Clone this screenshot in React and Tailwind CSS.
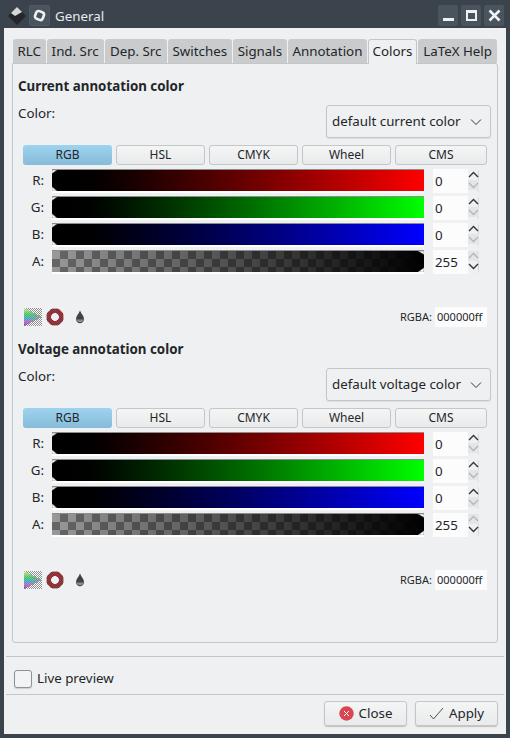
import React from "react";

const tabs = [
  ["RLC", "w-[33px]"],
  ["Ind. Src", "w-[58px]"],
  ["Dep. Src", "w-[63px]"],
  ["Switches", "w-[65px]"],
  ["Signals", "w-[55px]"],
  ["Annotation", "w-[80px]"],
  ["Colors", "w-[50px]"],
  ["LaTeX Help", "w-[80px]"],
];

const modes = [
  ["RGB", "w-[89px]"],
  ["HSL", "w-[89px]"],
  ["CMYK", "w-[89px]"],
  ["Wheel", "w-[89px]"],
  ["CMS", "w-[92px]"],
];

const Handles = ({ right }) => (
  <svg className={`absolute top-0 ${right ? "right-0" : "left-0"} h-full w-[6px]`} viewBox="0 0 6 24" preserveAspectRatio="none">
    {right ? (
      <>
        <polygon points="6,0 0,0 6,4" fill="#fff" stroke="#555" strokeWidth="0.5" />
        <polygon points="6,24 0,24 6,19" fill="#fff" stroke="#555" strokeWidth="0.5" />
      </>
    ) : (
      <>
        <polygon points="0,0 5,0 0,4" fill="#fff" stroke="#555" strokeWidth="0.5" />
        <polygon points="0,24 5,24 0,19" fill="#fff" stroke="#555" strokeWidth="0.5" />
      </>
    )}
  </svg>
);

const Arrow = ({ up, dim }) => (
  <svg width="11" height="10" viewBox="0 0 11 10" className={dim ? "bg-[#e3e5e7]" : ""}>
    <path d={up ? "M1 7 L5.5 2.5 L10 7" : "M1 3 L5.5 7.5 L10 3"} fill="none" stroke={dim ? "#b4b6b8" : "#31363b"} strokeWidth="1.4" />
  </svg>
);

const SliderRow = ({ label, bar, value, handle }) => (
  <div className="flex items-center h-[24px]">
    <div className="w-[17px] text-right text-[#232629]">{label}</div>
    <div className={`relative ml-[8px] w-[372px] h-[24px] border-t border-[#8a8c8e] border-b-[2px] border-b-white ${bar}`}>
      <Handles right={handle === "right"} />
    </div>
    <div className="ml-[9px] w-[35px] h-[24px] bg-[#fcfcfc] pl-[2px] leading-[24px] text-[#232629]">{value}</div>
    <div className="w-[11px] h-[22px] flex flex-col border-r border-[#d5d7d9] rounded-r-[2px]">
      <Arrow up dim={handle === "right"} />
      <Arrow dim={handle !== "right"} />
    </div>
  </div>
);

// the two gamut icons are dithered in the original, so they are drawn pixel by pixel
const PixelIcon = ({ color }) => {
  const cells = [];
  for (let y = 0; y < 18; y++) {
    for (let x = 0; x < 18; x++) {
      const c = color(x, y);
      if (c) cells.push(<rect key={`${x}-${y}`} x={x} y={y} width="1" height="1" fill={c} />);
    }
  }
  return (
    <svg width="18" height="18" viewBox="0 0 18 18" shapeRendering="crispEdges">
      {cells}
    </svg>
  );
};

const triStops = [
  [0, [210, 222, 140]],
  [0.35, [70, 200, 110]],
  [0.6, [70, 170, 200]],
  [0.8, [200, 100, 190]],
  [1, [110, 90, 180]],
];

const triangleColor = (x, y) => {
  const odd = (x + y) % 2 === 1;
  const half = Math.abs(y - 8.5);
  const inside = half <= 8.5 - (x * 8.5) / 18;
  if (!inside) return odd ? "#ffffff" : "#8c8c8c";
  const v = y / 17;
  let i = 0;
  while (i < triStops.length - 2 && v > triStops[i + 1][0]) i++;
  const [a, ca] = triStops[i];
  const [b, cb] = triStops[i + 1];
  const t = (v - a) / (b - a);
  const u = Math.pow(x / 17, 1.6);
  const rgb = ca.map((n, k) => Math.round((n + (cb[k] - n) * t) * (1 - u) + 150 * u + (odd ? 18 : -10)));
  return `rgb(${rgb.join(",")})`;
};

const ringColor = (x, y) => {
  const r = Math.hypot(x - 8.5, y - 8.5);
  if (r > 9 || r < 3.6) return null;
  if (r > 8.3 || r < 4.2) return "#b9a9aa";
  return (x + y) % 2 === 1 ? "#d3222c" : "#4f4547";
};

const Drop = () => (
  <svg width="10" height="14" viewBox="0 0 10 14">
    <path d="M5 0.5 C6 3.5 9 6 9 9 A4 4.3 0 0 1 1 9 C1 6 4 3.5 5 0.5 Z" fill="#3f4347" />
    <path d="M1.2 9.5 A4 4 0 0 0 8.8 9.5 Z" fill="#8b8d8f" />
  </svg>
);

const ColorSection = ({ title, combo }) => (
  <div>
    <div className="font-bold text-[#232629] leading-[20px] pl-[5px] pt-[12px]">{title}</div>
    <div className="flex justify-between pl-[5px] pr-[6px] mt-[9px]">
      <div className="-mt-[1px] leading-[18px] text-[#232629]">Color:</div>
      <div className="w-[165px] h-[33px] flex items-center justify-between pl-[5px] pr-[8px] border border-[#c4c6c8] rounded-[3px] bg-[#eff0f1] text-[#232629] shadow-[0_1px_1px_rgba(0,0,0,0.08)]">
        <span>{combo}</span>
        <svg width="12" height="8" viewBox="0 0 12 8">
          <path d="M1 1.5 L6 6.5 L11 1.5" fill="none" stroke="#31363b" strokeWidth="1" />
        </svg>
      </div>
    </div>
    <div className="flex gap-[4px] pl-[10px] mt-[7px]">
      {modes.map(([m, w], i) => (
        <div
          key={m}
          className={`${w} h-[20px] flex items-center justify-center text-[12px] text-[#232629] rounded-[3px] ${
            i === 0
              ? "bg-gradient-to-b from-[#9ed3ef] to-[#86bcd9] text-[#31485a]"
              : "border border-[#c4c6c8] bg-gradient-to-b from-[#f4f5f5] to-[#e9eaeb]"
          }`}
        >
          {m}
        </div>
      ))}
    </div>
    <div className="flex flex-col gap-[3px] pl-[14px] mt-[4px]">
      <SliderRow label="R:" value="0" bar="bg-gradient-to-r from-black to-[#ff0000]" />
      <SliderRow label="G:" value="0" bar="bg-gradient-to-r from-black to-[#00ff00]" />
      <SliderRow label="B:" value="0" bar="bg-gradient-to-r from-black to-[#0000ff]" />
      <SliderRow
        label="A:"
        value="255"
        handle="right"
        bar="[background:linear-gradient(to_right,rgba(0,0,0,0),#000),repeating-conic-gradient(#666_0_25%,#999_0_50%)_0_0/16px_16px]"
      />
    </div>
    <div className="flex items-center justify-between pl-[11px] pr-[10px] mt-[33px]">
      <div className="flex items-center">
        <PixelIcon color={triangleColor} />
        <div className="ml-[4px]">
          <PixelIcon color={ringColor} />
        </div>
        <div className="ml-[11px]">
          <Drop />
        </div>
      </div>
      <div className="flex items-center text-[11px] text-[#232629]">
        <span>RGBA:</span>
        <span className="ml-[3px] w-[52px] h-[20px] bg-[#fcfcfc] leading-[20px] pl-[2px]">000000ff</span>
      </div>
    </div>
  </div>
);

export default function App() {
  return (
    <div className="w-[510px] h-[738px] flex flex-col bg-[#3b444c] font-['Noto_Sans',sans-serif] text-[13.33px] overflow-hidden">
      <div className="h-[28px] flex items-center text-[#e8eaec] shrink-0 pl-[7px] pr-[6px] pt-[3px]">
        <svg width="20" height="20" viewBox="0 0 20 20">
          <polygon points="10,1 19,10 10,19 1,10" fill="#23272b" />
          <polygon points="10,1 15,6 8,10 4,7" fill="#d5d7d9" />
        </svg>
        <div className="ml-[2px] w-[21px] h-[21px] rounded-[2px] bg-[#4a545c] border border-[#505a62] flex items-center justify-center">
          <svg width="13" height="13" viewBox="0 0 13 13">
            <rect x="2.4" y="2.4" width="8.2" height="8.2" rx="2.6" transform="rotate(20 6.5 6.5)" fill="none" stroke="#eef0f1" strokeWidth="2.6" />
          </svg>
        </div>
        <span className="ml-[5px] pt-[2px]">General</span>
        <div className="ml-auto flex gap-[3px]">
          <div className="w-[20px] h-[21px] rounded-[2px] bg-[#4a545c] flex items-end justify-center pb-[5px]">
            <div className="w-[11px] h-[3px] bg-[#eef0f1]" />
          </div>
          <div className="w-[20px] h-[21px] rounded-[2px] bg-[#4a545c] flex items-center justify-center">
            <div className="w-[11px] h-[11px] border-[2px] border-t-[3px] border-[#eef0f1]" />
          </div>
          <div className="w-[20px] h-[21px] rounded-[2px] bg-[#4a545c] flex items-center justify-center">
            <svg width="13" height="13" viewBox="0 0 13 13">
              <path d="M1.5 1.5 L11.5 11.5 M11.5 1.5 L1.5 11.5" stroke="#eef0f1" strokeWidth="2.6" />
            </svg>
          </div>
        </div>
      </div>
      <div className="mx-[4px] mb-[4px] flex-1 bg-[#eff0f1] flex flex-col">
        <div className="pt-[10px] pl-[8px] pr-[8px] h-[628px] shrink-0">
          <div className="flex items-end h-[25px] pl-[1px]">
            {tabs.map(([t, w]) => (
              <div
                key={t}
                className={`${w} mr-[1px] flex items-center justify-center text-[#232629] rounded-t-[3px] ${
                  t === "Colors"
                    ? "h-[25px] bg-[#eff0f1] border border-b-0 border-[#c4c6c8] relative z-10 -mb-px pb-[1px]"
                    : "h-[24px] bg-[#c9cbcd] pt-[2px]"
                }`}
              >
                {t}
              </div>
            ))}
          </div>
          <div className="w-[486px] h-[580px] border border-[#c4c6c8] rounded-b-[3px] rounded-tr-[3px]">
            <ColorSection title="Current annotation color" combo="default current color" />
            <ColorSection title="Voltage annotation color" combo="default voltage color" />
          </div>
        </div>
        <div className="mx-[2px] border-t border-[#c4c6c8] h-[38px] flex items-center pl-[8px] pt-[6px]">
          <div className="w-[18px] h-[18px] rounded-[3px] border border-[#8f9193] bg-[#f2f3f4] shadow-[0_1px_1px_rgba(0,0,0,0.15)]" />
          <span className="ml-[5px] text-[#232629]">Live preview</span>
        </div>
        <div className="mx-[2px] border-t border-[#c4c6c8] flex justify-end gap-[8px] pr-[6px] pt-[6px]">
          <div className="w-[83px] h-[25px] border border-[#c4c6c8] rounded-[3px] bg-gradient-to-b from-[#f4f5f5] to-[#e9eaeb] shadow-[0_1px_1px_rgba(0,0,0,0.2)] flex items-center justify-center gap-[5px] text-[#232629]">
            <svg width="15" height="15" viewBox="0 0 15 15">
              <circle cx="7.5" cy="7.5" r="7.2" fill="#da4453" />
              <path d="M5 5 L10 10 M10 5 L5 10" stroke="#fff" strokeWidth="1" />
            </svg>
            <span>Close</span>
          </div>
          <div className="w-[83px] h-[25px] border border-[#c4c6c8] rounded-[3px] bg-gradient-to-b from-[#f4f5f5] to-[#e9eaeb] shadow-[0_1px_1px_rgba(0,0,0,0.2)] flex items-center justify-center gap-[5px] text-[#232629]">
            <svg width="15" height="13" viewBox="0 0 15 13">
              <path d="M1 8 L4.5 12 L14 1" fill="none" stroke="#4d5257" strokeWidth="1" />
            </svg>
            <span>Apply</span>
          </div>
        </div>
      </div>
    </div>
  );
}
